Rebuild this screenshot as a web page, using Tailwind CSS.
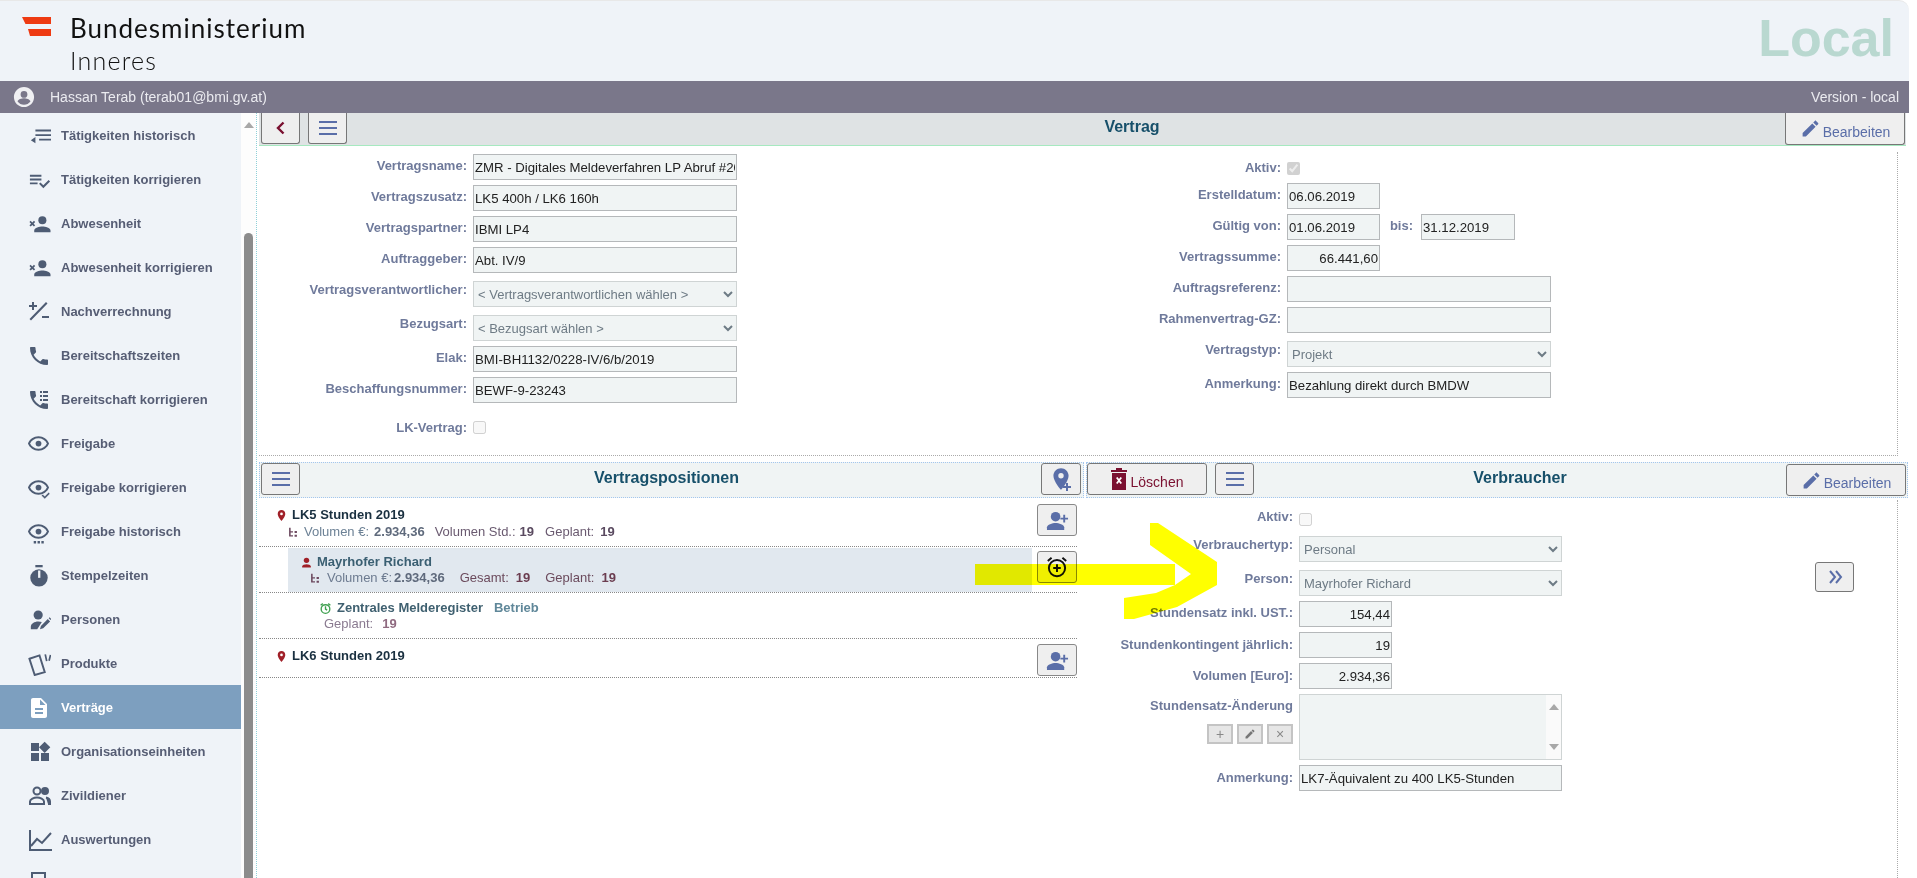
<!DOCTYPE html>
<html lang="de">
<head>
  <meta charset="UTF-8" />
  <title>Vertrag</title>
  <script src="https://cdn.jsdelivr.net/npm/@tailwindcss/browser@4"></script>
</head>
<body class="relative h-[878px] w-[1917px] overflow-hidden bg-white [font-family:'Liberation_Sans',sans-serif]">
  <!-- Icon-Sammlung -->
  <svg class="hidden">
    <symbol id="i-eye" viewBox="0 0 24 24"><path d="M12 6c3.79 0 7.17 2.13 8.82 5.5C19.17 14.87 15.79 17 12 17s-7.17-2.13-8.82-5.5C4.83 8.13 8.21 6 12 6m0-2C7 4 2.73 7.11 1 11.5 2.73 15.89 7 19 12 19s9.27-3.11 11-7.5C21.27 7.11 17 4 12 4z"/><circle cx="12" cy="11.5" r="3"/></symbol>
    <symbol id="i-xperson" viewBox="0 0 24 24"><circle cx="15" cy="7.5" r="4.2"/><path d="M15 14c-2.9 0-8.5 1.4-8.5 4.2V20h17v-1.8c0-2.8-5.6-4.2-8.5-4.2z"/><path d="M1.5 9.5l1.3-1.3 1.7 1.7 1.7-1.7 1.3 1.3-1.7 1.7 1.7 1.7-1.3 1.3-1.7-1.7-1.7 1.7-1.3-1.3 1.7-1.7z"/></symbol>
    <symbol id="i-phone" viewBox="0 0 24 24"><path d="M6.62 10.79c1.44 2.83 3.76 5.14 6.59 6.59l2.2-2.2c.27-.27.67-.36 1.02-.24 1.12.37 2.33.57 3.57.57.55 0 1 .45 1 1V20c0 .55-.45 1-1 1-9.39 0-17-7.61-17-17 0-.55.45-1 1-1h3.5c.55 0 1 .45 1 1 0 1.25.2 2.45.57 3.57.11.35.03.74-.25 1.02l-2.2 2.2z"/></symbol>
    <symbol id="i-personadd" viewBox="0 0 24 24"><circle cx="10" cy="8" r="5"/><path d="M10 14.5c-3.3 0-9 1.6-9 4.6V22h18v-2.9c0-3-5.7-4.6-9-4.6z"/><path d="M18 6v3h-3v2h3v3h2v-3h3V9h-3V6z"/></symbol>
    <symbol id="i-menu" viewBox="0 0 18 14"><path d="M0 0h18v2H0zM0 6h18v2H0zM0 12h18v2H0z"/></symbol>
    <symbol id="i-pencil" viewBox="0 0 24 24"><path d="M3 17.25V21h3.75L17.81 9.94l-3.75-3.75L3 17.25zM20.71 7.04c.39-.39.39-1.02 0-1.41l-2.34-2.34c-.39-.39-1.02-.39-1.41 0l-1.83 1.83 3.75 3.75 1.83-1.83z"/></symbol>
    <symbol id="i-pin" viewBox="0 0 24 24"><path d="M12 2C8.13 2 5 5.13 5 9c0 5.25 7 13 7 13s7-7.75 7-13c0-3.87-3.13-7-7-7zm0 9.5a2.5 2.5 0 1 1 0-5 2.5 2.5 0 0 1 0 5z"/></symbol>
    <symbol id="i-tree" viewBox="0 0 12 14"><path d="M1 1h2v11H1zM3 5.500h3v1.500H3zM3 10.500h3V12H3z"/><path d="M8 5h3v2.500H8zM8 10h3v2.500H8z"/></symbol>
  </svg>

  <!-- Kopfbereich -->
  <header class="relative h-[81px] w-[1909px] rounded-tr-[10px] border-t border-[#e8e8e8] bg-[#eff3f8]">
    <div class="flex">
      <svg class="ml-[22px] mt-[16px] h-[20px] w-[30px]" viewBox="0 0 30 20"><path d="M0 0h29v7H3.500z M6 12h23v7H8z" fill="#ee3a12"/></svg>
      <div class="ml-[18px] text-[#111] [font-family:Lato,sans-serif]">
        <div class="mt-[11px] text-[26px] leading-[32px] tracking-[1px]">Bundesministerium</div>
        <div class="mt-[1px] text-[25px] font-light leading-[30px] tracking-[1.2px]">Inneres</div>
      </div>
    </div>
    <div class="absolute right-[15px] top-[9px] text-[52px] font-bold leading-[56px] text-[#b9d8d0]">Local</div>
  </header>
  <div class="flex h-[32px] w-[1909px] items-center bg-[#7a778a] text-[14px] text-[#ebebf0]">
    <svg class="ml-[13px] h-[22px] w-[22px]" viewBox="0 0 24 24" fill="#f0f0f3"><path d="M12 1C5.9 1 1 5.900 1 12s4.900 11 11 11 11-4.900 11-11S18.100 1 12 1zm0 4.500a3.700 3.700 0 1 1 0 7.400 3.700 3.700 0 0 1 0-7.400zm0 15c-2.800 0-5.400-1.400-7-3.600.1-2.300 4.700-3.600 7-3.600s6.900 1.300 7 3.600c-1.600 2.200-4.200 3.600-7 3.600z"/></svg>
    <span class="ml-[15px]">Hassan Terab (terab01@bmi.gv.at)</span>
    <span class="ml-auto mr-[10px]">Version - local</span>
  </div>

  <div class="flex h-[765px]">
    <!-- Seitenmenü -->
    <nav class="h-full w-[241px] shrink-0 overflow-hidden bg-[#eff3f8] text-[13px] font-bold text-[#565d74]">
      <a class="flex h-[44px] items-center pt-[2px]"><svg class="ml-[29px] mr-[10px] h-[22px] w-[22px] fill-[#4e5c74]" viewBox="0 0 24 24"><path d="M7 5h17v2H7zM7 10h17v2H7zM11 15h13v2H11zM7 13v7l-5-3.500z"/></svg>Tätigkeiten historisch</a>
      <a class="flex h-[44px] items-center pt-[2px]"><svg class="ml-[28px] mr-[10px] h-[23px] w-[23px] fill-[#4e5c74]" viewBox="0 0 24 24"><path d="M14 10H2v2h12v-2zm0-4H2v2h12V6zM2 16h8v-2H2v2zm19.500-4.500L23 13l-6.990 7-4.510-4.500L13 14l3.010 3 5.490-5.500z"/></svg>Tätigkeiten korrigieren</a>
      <a class="flex h-[44px] items-center pt-[2px]"><svg class="ml-[28px] mr-[10px] h-[23px] w-[23px] fill-[#4e5c74]"><use href="#i-xperson"/></svg>Abwesenheit</a>
      <a class="flex h-[44px] items-center pt-[2px]"><svg class="ml-[28px] mr-[10px] h-[23px] w-[23px] fill-[#4e5c74]"><use href="#i-xperson"/></svg>Abwesenheit korrigieren</a>
      <a class="flex h-[44px] items-center pt-[2px]"><svg class="ml-[29px] mr-[12px] h-[20px] w-[20px] fill-[#4e5c74]" viewBox="0 0 20 20"><path d="M3 0h2v3h3v2H5v3H3V5H0V3h3zM13 14h7v2h-7zM17 0l1.500 1.500L2 18.500.500 17z"/></svg>Nachverrechnung</a>
      <a class="flex h-[44px] items-center pt-[2px]"><svg class="ml-[27px] mr-[10px] h-[24px] w-[24px] fill-[#4e5c74]"><use href="#i-phone"/></svg>Bereitschaftszeiten</a>
      <a class="flex h-[44px] items-center pt-[2px]"><svg class="ml-[27px] mr-[10px] h-[24px] w-[24px] fill-[#4e5c74]" viewBox="0 0 24 24"><use href="#i-phone"/><path d="M13 3h2v2h-2zM16 3h5v2h-5zM13 7h2v2h-2zM16 7h5v2h-5zM13 11h2v2h-2zM16 11h5v2h-5z"/></svg>Bereitschaft korrigieren</a>
      <a class="flex h-[44px] items-center pt-[2px]"><svg class="ml-[27px] mr-[11px] h-[24px] w-[23px] fill-[#4e5c74]"><use href="#i-eye"/></svg>Freigabe</a>
      <a class="flex h-[44px] items-center pt-[2px]"><svg class="ml-[27px] mr-[11px] h-[24px] w-[23px] fill-[#4e5c74]" viewBox="0 0 24 24"><use href="#i-eye"/><path d="M22.500 16.500L24 18l-5.500 5.500L15 20l1.500-1.500 2 2z" stroke="#eff3f8" stroke-width=".6"/></svg>Freigabe korrigieren</a>
      <a class="flex h-[44px] items-center pt-[2px]"><svg class="ml-[27px] mr-[11px] h-[24px] w-[23px] fill-[#4e5c74]" viewBox="0 0 24 24"><use href="#i-eye"/><path d="M7 21.500h2.500V24H7zM11 21.500h2.500V24H11zM15 21.500h2.500V24H15z"/></svg>Freigabe historisch</a>
      <a class="flex h-[44px] items-center pt-[2px]"><svg class="ml-[28px] mr-[11px] h-[22px] w-[22px] fill-[#4e5c74]" viewBox="0 0 22 24"><path d="M7 0h8v2.500H7z"/><circle cx="11" cy="14" r="9.500"/><path d="M10 6h2.500v8H10z" fill="#eff3f8"/></svg>Stempelzeiten</a>
      <a class="flex h-[44px] items-center pt-[2px]"><svg class="ml-[29px] mr-[10px] h-[22px] w-[22px] fill-[#4e5c74]" viewBox="0 0 24 24"><circle cx="10" cy="6.500" r="5"/><path d="M2 22v-3c0-3 4-5.500 8-5.500 1.500 0 2.800.2 4 .7L9 22z"/><path d="M12 22l1-3.500 7.500-7.500 2.500 2.500L15.500 21zM21.500 10l1-1 2 2-1 1z"/></svg>Personen</a>
      <a class="flex h-[44px] items-center pt-[2px]"><svg class="ml-[28px] mr-[10px] h-[23px] w-[23px] fill-none stroke-[#4e5c74]" viewBox="0 0 24 24" stroke-width="2"><path d="M1.500 6l10.500-3.500L17.500 20 7 23z"/><path d="M18 1.500l1.500 7M23.500 2l-1.500 6" stroke-width="1.800"/></svg>Produkte</a>
      <a class="flex h-[44px] items-center bg-[#7d9fbf] pt-[2px] text-white"><svg class="ml-[27px] mr-[10px] h-[24px] w-[24px] fill-white" viewBox="0 0 24 24"><path d="M14 2H6c-1.100 0-1.990.9-1.990 2L4 20c0 1.100.89 2 1.990 2H18c1.100 0 2-.9 2-2V8l-6-6zm2 16H8v-2h8v2zm0-4H8v-2h8v2zm-3-5V3.500L18.500 9H13z"/></svg>Verträge</a>
      <a class="flex h-[44px] items-center pt-[2px]"><svg class="ml-[28px] mr-[9px] h-[24px] w-[24px] fill-[#4e5c74]" viewBox="0 0 24 24"><path d="M13 13v8h8v-8h-8zM3 21h8v-8H3v8zM3 3v8h8V3H3zm13.660-1.310L11 7.340 16.660 13l5.660-5.660-5.660-5.650z"/></svg>Organisationseinheiten</a>
      <a class="flex h-[44px] items-center pt-[2px]"><svg class="ml-[28px] mr-[9px] h-[24px] w-[24px] fill-none stroke-[#4e5c74]" viewBox="0 0 24 24" stroke-width="2"><circle cx="9" cy="7" r="3.500"/><path d="M2 20v-2.500C2 15 6 13.500 9 13.500s7 1.500 7 4V20z"/><circle cx="17" cy="7" r="3" fill="#4e5c74"/><path d="M18 13.500c2 .5 4 1.500 4 4V20h-2" fill="#4e5c74"/></svg>Zivildiener</a>
      <a class="flex h-[44px] items-center pt-[2px]"><svg class="ml-[28px] mr-[9px] h-[24px] w-[24px] fill-none stroke-[#4e5c74]" viewBox="0 0 24 24" stroke-width="2"><path d="M2 2v20h22"/><path d="M3 18l6-7 5 4 9-10"/></svg>Auswertungen</a>
      <a class="flex h-[44px] items-center pt-[2px]"><svg class="ml-[30px] h-[24px] w-[18px] fill-none stroke-[#4e5c74]" viewBox="0 0 18 24" stroke-width="2"><path d="M2 1h13v22H2z"/></svg></a>
    </nav>

    <!-- Scrollbalken -->
    <div class="relative h-full w-[15px] shrink-0 bg-[#fdfdfd]">
      <div class="absolute left-[3px] top-[9px] h-0 w-0 border-x-[5px] border-b-[6px] border-x-transparent border-b-[#a8a8a8]"></div>
      <div class="absolute left-[3px] top-[120px] h-[645px] w-[9px] rounded-t-[5px] bg-[#8c8c8c]"></div>
    </div>

    <!-- Inhalt -->
    <main class="h-full w-[1653px] border-l border-dotted border-[#8fd0d8] pl-[2px]">
      <div class="flex h-[33px] w-[1647px] border-b border-[#a6e9c0] bg-[#dfe3e4]">
        <button class="ml-[2px] flex h-[31px] w-[39px] items-center justify-center rounded-b-[3px] border border-t-0 border-[#777] bg-[#efefef]">
          <svg class="h-[14px] w-[9px] fill-none stroke-[#7a1030]" viewBox="0 0 9 14" stroke-width="2.400"><path d="M7.500 1.500L2 7l5.500 5.500"/></svg>
        </button>
        <button class="ml-[8px] flex h-[31px] w-[39px] items-center justify-center rounded-b-[3px] border border-t-0 border-[#777] bg-[#efefef]">
          <svg class="h-[14px] w-[18px] fill-[#5a6ea8]"><use href="#i-menu"/></svg>
        </button>
        <div class="flex-1 pb-[3px] pl-[132px] text-center text-[16px] font-bold leading-[27px] text-[#17506a]">Vertrag</div>
        <button class="mr-[1px] flex h-[32px] w-[120px] items-center justify-center rounded-b-[3px] border border-t-0 border-[#777] bg-[#efefef] text-[14px] text-[#5a6ea8]">
          <svg class="mr-[2px] h-[21px] w-[21px] fill-[#5a6ea8]"><use href="#i-pencil"/></svg><span class="mt-[8px]">Bearbeiten</span>
        </button>
      </div>

      <!-- Vertragsdaten -->
      <section class="mt-[6px] flex h-[304px] w-[1639px] border-b border-r border-dotted border-[#aaa] pt-[2px] text-[13.2px]">
        <div class="w-[740px]">
          <div class="mb-[5px] flex h-[26px]"><label class="w-[209px] pr-[1px] pt-[4px] text-right text-[13px] font-bold leading-[16px] text-[#6f7a9b]">Vertragsname:</label><input readonly value="ZMR - Digitales Meldeverfahren LP Abruf #20" class="ml-[5px] h-[26px] w-[264px] border border-[#b5b8ba] bg-[#f0f4f4] px-[1px] text-[#222]" /></div>
          <div class="mb-[5px] flex h-[26px]"><label class="w-[209px] pr-[1px] pt-[4px] text-right text-[13px] font-bold leading-[16px] text-[#6f7a9b]">Vertragszusatz:</label><input readonly value="LK5 400h / LK6 160h" class="ml-[5px] h-[26px] w-[264px] border border-[#b5b8ba] bg-[#f0f4f4] px-[1px] text-[#222]" /></div>
          <div class="mb-[5px] flex h-[26px]"><label class="w-[209px] pr-[1px] pt-[4px] text-right text-[13px] font-bold leading-[16px] text-[#6f7a9b]">Vertragspartner:</label><input readonly value="IBMI LP4" class="ml-[5px] h-[26px] w-[264px] border border-[#b5b8ba] bg-[#f0f4f4] px-[1px] text-[#222]" /></div>
          <div class="mb-[8px] flex h-[26px]"><label class="w-[209px] pr-[1px] pt-[4px] text-right text-[13px] font-bold leading-[16px] text-[#6f7a9b]">Auftraggeber:</label><input readonly value="Abt. IV/9" class="ml-[5px] h-[26px] w-[264px] border border-[#b5b8ba] bg-[#f0f4f4] px-[1px] text-[#222]" /></div>
          <div class="mb-[8px] flex h-[26px]"><label class="w-[209px] pr-[1px] pt-[1px] text-right text-[13px] font-bold leading-[16px] text-[#6f7a9b]">Vertragsverantwortlicher:</label><select disabled class="ml-[5px] h-[26px] w-[264px] border border-[#cfd4d4] bg-[#f0f4f4] text-[13px] text-[#6e7b85] opacity-100"><option>&lt; Vertragsverantwortlichen wählen &gt;</option></select></div>
          <div class="mb-[5px] flex h-[26px]"><label class="w-[209px] pr-[1px] pt-[1px] text-right text-[13px] font-bold leading-[16px] text-[#6f7a9b]">Bezugsart:</label><select disabled class="ml-[5px] h-[26px] w-[264px] border border-[#cfd4d4] bg-[#f0f4f4] text-[13px] text-[#6e7b85] opacity-100"><option>&lt; Bezugsart wählen &gt;</option></select></div>
          <div class="mb-[5px] flex h-[26px]"><label class="w-[209px] pr-[1px] pt-[4px] text-right text-[13px] font-bold leading-[16px] text-[#6f7a9b]">Elak:</label><input readonly value="BMI-BH1132/0228-IV/6/b/2019" class="ml-[5px] h-[26px] w-[264px] border border-[#b5b8ba] bg-[#f0f4f4] px-[1px] text-[#222]" /></div>
          <div class="flex h-[26px]"><label class="w-[209px] pr-[1px] pt-[4px] text-right text-[13px] font-bold leading-[16px] text-[#6f7a9b]">Beschaffungsnummer:</label><input readonly value="BEWF-9-23243" class="ml-[5px] h-[26px] w-[264px] border border-[#b5b8ba] bg-[#f0f4f4] px-[1px] text-[#222]" /></div>
          <div class="mt-[17px] flex"><label class="w-[209px] pr-[1px] text-right text-[13px] font-bold leading-[16px] text-[#6f7a9b]">LK-Vertrag:</label><input type="checkbox" disabled class="ml-[5px] mt-[1px] h-[13px] w-[13px]" /></div>
        </div>
        <div class="flex-1">
          <div class="mb-[8px] flex h-[21px]"><label class="w-[288px] pr-[6px] pt-[6px] text-right text-[13px] font-bold leading-[16px] text-[#6f7a9b]">Aktiv:</label><input type="checkbox" checked disabled class="mt-[8px] h-[13px] w-[13px]" /></div>
          <div class="mb-[5px] flex h-[26px]"><label class="w-[288px] pr-[6px] pt-[4px] text-right text-[13px] font-bold leading-[16px] text-[#6f7a9b]">Erstelldatum:</label><input readonly value="06.06.2019" class="h-[26px] w-[93px] border border-[#b5b8ba] bg-[#f0f4f4] px-[1px] text-[#222]" /></div>
          <div class="mb-[5px] flex h-[26px]"><label class="w-[288px] pr-[6px] pt-[4px] text-right text-[13px] font-bold leading-[16px] text-[#6f7a9b]">Gültig von:</label><input readonly value="01.06.2019" class="h-[26px] w-[93px] border border-[#b5b8ba] bg-[#f0f4f4] px-[1px] text-[#222]" /><label class="w-[41px] pr-[8px] pt-[4px] text-right text-[13px] font-bold leading-[16px] text-[#6f7a9b]">bis:</label><input readonly value="31.12.2019" class="h-[26px] w-[94px] border border-[#b5b8ba] bg-[#f0f4f4] px-[1px] text-[#222]" /></div>
          <div class="mb-[5px] flex h-[26px]"><label class="w-[288px] pr-[6px] pt-[4px] text-right text-[13px] font-bold leading-[16px] text-[#6f7a9b]">Vertragssumme:</label><input readonly value="66.441,60" class="h-[26px] w-[93px] border border-[#b5b8ba] bg-[#f0f4f4] px-[1px] text-right text-[#222]" /></div>
          <div class="mb-[5px] flex h-[26px]"><label class="w-[288px] pr-[6px] pt-[4px] text-right text-[13px] font-bold leading-[16px] text-[#6f7a9b]">Auftragsreferenz:</label><input readonly class="h-[26px] w-[264px] border border-[#b5b8ba] bg-[#f0f4f4] px-[1px] text-[#222]" /></div>
          <div class="mb-[8px] flex h-[26px]"><label class="w-[288px] pr-[6px] pt-[4px] text-right text-[13px] font-bold leading-[16px] text-[#6f7a9b]">Rahmenvertrag-GZ:</label><input readonly class="h-[26px] w-[264px] border border-[#b5b8ba] bg-[#f0f4f4] px-[1px] text-[#222]" /></div>
          <div class="mb-[5px] flex h-[26px]"><label class="w-[288px] pr-[6px] pt-[1px] text-right text-[13px] font-bold leading-[16px] text-[#6f7a9b]">Vertragstyp:</label><select disabled class="h-[26px] w-[264px] border border-[#cfd4d4] bg-[#f0f4f4] text-[13px] text-[#6e7b85] opacity-100"><option>Projekt</option></select></div>
          <div class="flex h-[26px]"><label class="w-[288px] pr-[6px] pt-[4px] text-right text-[13px] font-bold leading-[16px] text-[#6f7a9b]">Anmerkung:</label><input readonly value="Bezahlung direkt durch BMDW" class="h-[26px] w-[264px] border border-[#b5b8ba] bg-[#f0f4f4] px-[1px] text-[#222]" /></div>
        </div>
      </section>

      <div class="mt-[6px] flex">
        <!-- Vertragspositionen -->
        <section class="w-[825px] text-[13px]">
          <div class="flex h-[36px] items-start border border-dotted border-[#a3c6ee] bg-[#f0f4f4]">
            <button class="ml-[1px] flex h-[32px] w-[39px] items-center justify-center rounded-[3px] border border-[#777] bg-[#efefef]"><svg class="h-[14px] w-[18px] fill-[#5a6ea8]"><use href="#i-menu"/></svg></button>
            <div class="flex-1 pr-[8px] text-center text-[16px] font-bold leading-[30px] text-[#17506a]">Vertragspositionen</div>
            <button class="mr-[2px] flex h-[32px] w-[40px] items-center justify-center rounded-[3px] border border-[#777] bg-[#efefef]"><svg class="h-[26px] w-[26px] fill-[#5a6ea8]" viewBox="0 0 26 26"><use href="#i-pin"/><path d="M18 17h2v3h3v2h-3v3h-2v-3h-3v-2h3z"/></svg></button>
          </div>
          <div class="flex h-[49px] w-[818px] justify-between border-b border-dotted border-[#888]">
            <div class="pl-[16px] pt-[9px]">
              <div class="flex h-[16px] items-center font-bold text-[#1a3040]"><svg class="mr-[4px] h-[13px] w-[13px] fill-[#a02028]"><use href="#i-pin"/></svg><span>LK5 Stunden 2019</span></div>
              <div class="mt-[1px] flex h-[16px] items-center pl-[13px] text-[#6d8296]"><svg class="mr-[6px] h-[11px] w-[10px] fill-[#6d4a60]"><use href="#i-tree"/></svg>Volumen €:<b class="ml-[5px] mr-[10px] text-[#5f6a7c]">2.934,36</b><span class="text-[#6a5a70]">Volumen Std.:</span><b class="ml-[4px] mr-[11px] text-[#5a4a60]">19</b><span class="text-[#6a5a70]">Geplant:</span><b class="ml-[6px] text-[#5a4a60]">19</b></div>
            </div>
            <button class="mt-[6px] flex h-[32px] w-[40px] items-center justify-center rounded-[3px] border border-[#888] bg-[#efefef]"><svg class="h-[23px] w-[23px] fill-[#5a6ea8]"><use href="#i-personadd"/></svg></button>
          </div>
          <div class="flex h-[46px] w-[818px] justify-between border-b border-dotted border-[#888] pt-[1px]">
            <div class="ml-[29px] h-[44px] w-[744px] bg-[#e1e8ef] pl-[12px] pt-[6px]">
              <div class="flex h-[16px] items-center font-bold text-[#3a5f72]"><svg class="mr-[4px] h-[13px] w-[13px] fill-[#a02028]" viewBox="0 0 24 24"><circle cx="12" cy="8" r="5"/><path d="M12 15c-3.300 0-8 1.600-8 4v2h16v-2c0-2.400-4.700-4-8-4z"/></svg>Mayrhofer Richard</div>
              <div class="flex h-[16px] items-center pl-[10px] text-[#6d7b90]"><svg class="mr-[7px] h-[11px] w-[10px] fill-[#6d4a60]"><use href="#i-tree"/></svg>Volumen €:<b class="ml-[2px] mr-[15px] text-[#5f6a7c]">2.934,36</b><span class="text-[#6b4a5c]">Gesamt:</span><b class="ml-[7px] mr-[15px] text-[#6b3d50]">19</b><span class="text-[#6b4a5c]">Geplant:</span><b class="ml-[7px] text-[#6b3d50]">19</b></div>
            </div>
            <button class="mt-[3px] flex h-[32px] w-[40px] items-center justify-center rounded-[3px] border border-[#888] bg-[#efefef]"><svg class="h-[26px] w-[26px] fill-none stroke-[#111]" viewBox="0 0 24 24" stroke-width="1.800"><circle cx="12" cy="13" r="7.500"/><path d="M12 9.500v7M8.500 13h7M3.500 6.500l3.500-3M20.500 6.500l-3.500-3"/></svg></button>
          </div>
          <div class="h-[46px] w-[818px] border-b border-dotted border-[#888] pt-[7px]">
            <div class="flex h-[16px] items-center pl-[60px] text-[#3f6070]"><svg class="mr-[5px] h-[13px] w-[13px] fill-none stroke-[#3fa050]" viewBox="0 0 24 24" stroke-width="2.500"><circle cx="12" cy="13" r="8"/><path d="M12 8v5l3 2M3 6l4-3M21 6l-4-3"/></svg><span class="font-bold">Zentrales Melderegister</span><span class="ml-[11px] font-bold text-[#5f8799]">Betrieb</span></div>
            <div class="flex h-[16px] items-center pl-[65px] text-[#8a7a90]">Geplant:<b class="ml-[9px] text-[#8f6a80]">19</b></div>
          </div>
          <div class="flex h-[39px] w-[818px] justify-between border-b border-dotted border-[#888]">
            <div class="pl-[16px] pt-[9px]"><div class="flex h-[16px] items-center font-bold text-[#1a3040]"><svg class="mr-[4px] h-[13px] w-[13px] fill-[#a02028]"><use href="#i-pin"/></svg><span>LK6 Stunden 2019</span></div></div>
            <button class="mt-[5px] flex h-[32px] w-[40px] items-center justify-center rounded-[3px] border border-[#888] bg-[#efefef]"><svg class="h-[23px] w-[23px] fill-[#5a6ea8]"><use href="#i-personadd"/></svg></button>
          </div>
        </section>

        <!-- Verbraucher -->
        <section class="ml-[2px] w-[822px] text-[13.2px]">
          <div class="flex h-[36px] items-start border border-dotted border-[#a3c6ee] bg-[#f0f4f4]">
            <button class="flex h-[32px] w-[120px] items-center justify-center rounded-[3px] border border-[#777] bg-[#efefef] text-[14px] text-[#7a1030]"><svg class="mr-[4px] h-[22px] w-[16px] fill-[#7a1030]" viewBox="0 0 16 22"><path d="M5 0h6v2h5v2H0V2h5zM1 5h14v17H1z"/><path d="M5 10l1.500-1L8 11l1.500-2L11 10l-2 2.500 2 2.500-1.500 1L8 14l-1.500 2L5 15l2-2.500z" fill="#fff"/></svg><span class="mt-[7px]">Löschen</span></button>
            <button class="ml-[8px] flex h-[32px] w-[39px] items-center justify-center rounded-[3px] border border-[#777] bg-[#efefef]"><svg class="h-[14px] w-[18px] fill-[#5a6ea8]"><use href="#i-menu"/></svg></button>
            <div class="flex-1 text-center text-[16px] font-bold leading-[30px] text-[#17506a]">Verbraucher</div>
            <button class="mr-[1px] mt-[1px] flex h-[32px] w-[120px] items-center justify-center rounded-[3px] border border-[#777] bg-[#efefef] text-[14px] text-[#5a6ea8]"><svg class="mr-[2px] h-[21px] w-[21px] fill-[#5a6ea8]"><use href="#i-pencil"/></svg><span class="mt-[7px]">Bearbeiten</span></button>
          </div>
          <div class="mt-[2px] flex h-[378px] w-[812px] border-r border-dotted border-[#aaa] pt-[12px]">
            <div class="w-[476px]">
              <div class="mb-[9px] flex h-[15px]"><label class="-mt-[3px] w-[213px] pr-[6px] text-right text-[13px] font-bold leading-[16px] text-[#6f7a9b]">Aktiv:</label><input type="checkbox" disabled class="mt-[1px] h-[13px] w-[13px]" /></div>
              <div class="mb-[8px] flex h-[26px]"><label class="w-[213px] pr-[6px] pt-[1px] text-right text-[13px] font-bold leading-[16px] text-[#6f7a9b]">Verbrauchertyp:</label><select disabled class="h-[26px] w-[263px] border border-[#cfd4d4] bg-[#f0f4f4] text-[13px] text-[#6e7b85] opacity-100"><option>Personal</option></select></div>
              <div class="mb-[5px] flex h-[26px]"><label class="w-[213px] pr-[6px] pt-[1px] text-right text-[13px] font-bold leading-[16px] text-[#6f7a9b]">Person:</label><select disabled class="h-[26px] w-[263px] border border-[#cfd4d4] bg-[#f0f4f4] text-[13px] text-[#6e7b85] opacity-100"><option>Mayrhofer Richard</option></select></div>
              <div class="mb-[5px] flex h-[26px]"><label class="w-[213px] pr-[6px] pt-[4px] text-right text-[13px] font-bold leading-[16px] text-[#6f7a9b]">Stundensatz inkl. UST.:</label><input readonly value="154,44" class="h-[26px] w-[93px] border border-[#b5b8ba] bg-[#f0f4f4] px-[1px] text-right text-[#222]" /></div>
              <div class="mb-[5px] flex h-[26px]"><label class="w-[213px] pr-[6px] pt-[5px] text-right text-[13px] font-bold leading-[16px] text-[#6f7a9b]">Stundenkontingent jährlich:</label><input readonly value="19" class="h-[26px] w-[93px] border border-[#b5b8ba] bg-[#f0f4f4] px-[1px] text-right text-[#222]" /></div>
              <div class="mb-[5px] flex h-[26px]"><label class="w-[213px] pr-[6px] pt-[5px] text-right text-[13px] font-bold leading-[16px] text-[#6f7a9b]">Volumen [Euro]:</label><input readonly value="2.934,36" class="h-[26px] w-[93px] border border-[#b5b8ba] bg-[#f0f4f4] px-[1px] text-right text-[#222]" /></div>
              <div class="mb-[5px] flex h-[66px]">
                <div class="w-[213px] pr-[6px] text-right">
                  <div class="pt-[4px] text-[13px] font-bold leading-[16px] text-[#6f7a9b]">Stundensatz-Änderung</div>
                  <div class="mt-[10px] flex justify-end gap-[4px]">
                    <span class="flex h-[20px] w-[26px] items-center justify-center border-2 border-[#c4c4c4] bg-[#e6e6e6] text-[14px] leading-none text-[#888]">+</span>
                    <span class="flex h-[20px] w-[26px] items-center justify-center border-2 border-[#c4c4c4] bg-[#e6e6e6]"><svg class="h-[12px] w-[12px] fill-[#777]"><use href="#i-pencil"/></svg></span>
                    <span class="flex h-[20px] w-[26px] items-center justify-center border-2 border-[#c4c4c4] bg-[#e6e6e6] text-[14px] leading-none text-[#888]">×</span>
                  </div>
                </div>
                <div class="flex h-[66px] w-[263px] border border-[#cfd4d4] bg-[#f0f4f4]">
                  <div class="flex-1"></div>
                  <div class="flex w-[15px] flex-col items-center justify-between bg-[#fafafa] py-[9px]">
                    <div class="h-0 w-0 border-x-[5px] border-b-[6px] border-x-transparent border-b-[#a8a8a8]"></div>
                    <div class="h-0 w-0 border-x-[5px] border-t-[6px] border-x-transparent border-t-[#a8a8a8]"></div>
                  </div>
                </div>
              </div>
              <div class="flex h-[26px]"><label class="w-[213px] pr-[6px] pt-[5px] text-right text-[13px] font-bold leading-[16px] text-[#6f7a9b]">Anmerkung:</label><input readonly value="LK7-Äquivalent zu 400 LK5-Stunden" class="h-[26px] w-[263px] border border-[#b5b8ba] bg-[#f0f4f4] px-[1px] text-[#222]" /></div>
            </div>
            <button class="ml-[253px] mt-[50px] flex h-[30px] w-[39px] items-center justify-center rounded-[3px] border border-[#777] bg-[#efefef]"><svg class="h-[16px] w-[16px] fill-none stroke-[#5a6ea8]" viewBox="0 0 16 16" stroke-width="2"><path d="M3 2l5 6-5 6M9 2l5 6-5 6"/></svg></button>
          </div>
        </section>
      </div>
    </main>
  </div>

  <!-- gelber Pfeil, liegt über dem Screenshot -->
  <svg class="pointer-events-none absolute left-0 top-0 mix-blend-multiply" width="1917" height="878" fill="#ffff00"><path d="M975 564H1175V585H975Z"/><path d="M1150 545V523H1158L1217 562V585L1177 607L1134 619H1124V598L1156 593L1175 585L1191 574Z"/></svg>
</body>
</html>
